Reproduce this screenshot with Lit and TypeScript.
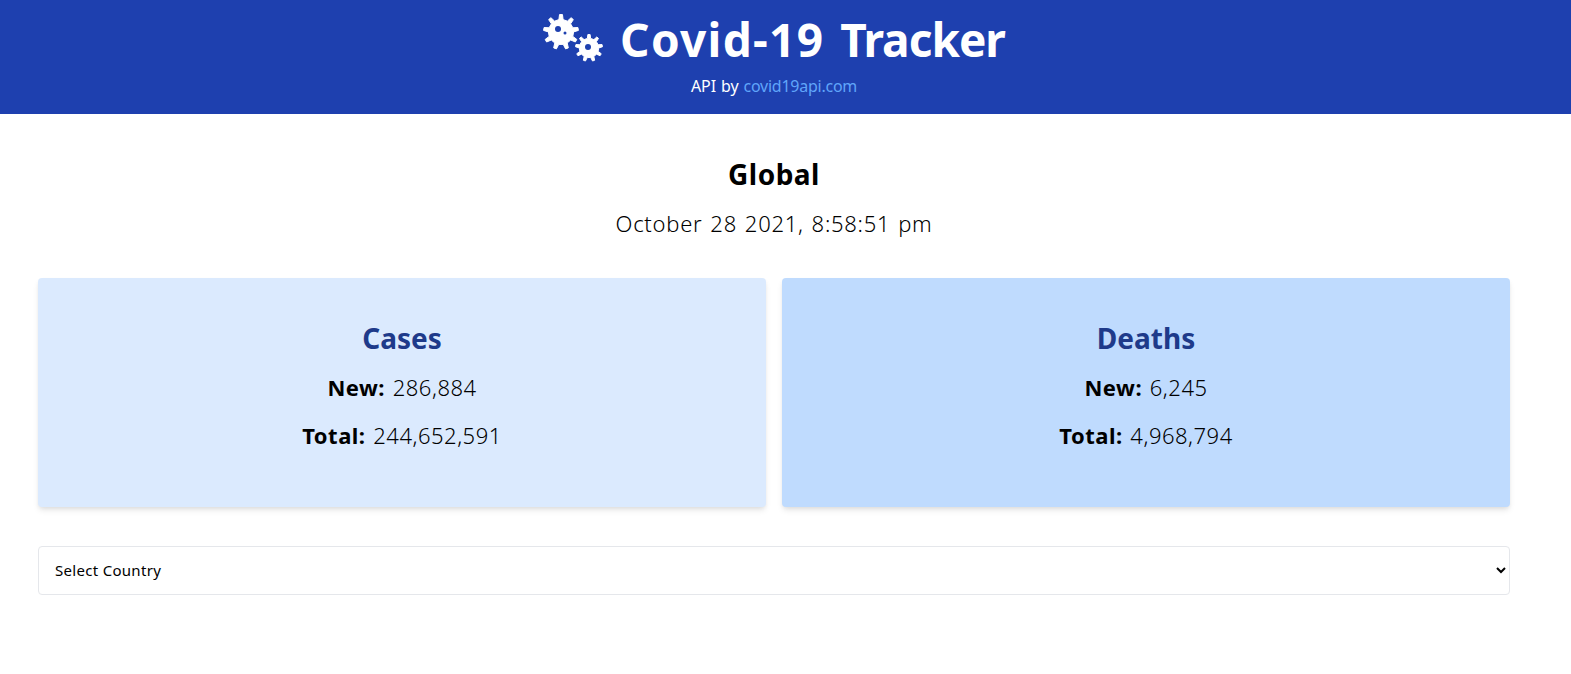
import { LitElement, html, css } from "lit";
import { customElement } from "lit/decorators.js";

function gear(cx: number, cy: number, r: number, teeth: number) {
  const pts: string[] = [];
  const rb = r * 0.72;
  const step = (Math.PI * 2) / teeth;
  const p = (rad: number, ang: number) =>
    `${(cx + rad * Math.cos(ang)).toFixed(2)} ${(cy + rad * Math.sin(ang)).toFixed(2)}`;
  for (let i = 0; i < teeth; i++) {
    const a = i * step - Math.PI / 2;
    const w = step * 0.12;
    const wb = step * 0.24;
    pts.push(`${i === 0 ? "M" : "L"}${p(rb, a - wb)}`, `L${p(r, a - w)}`, `L${p(r, a + w)}`, `L${p(rb, a + wb)}`);
  }
  return pts.join("") + "z";
}

@customElement("app-root")
export class AppRoot extends LitElement {
  static styles = css`
    :host {
      display: block;
      font-family: "Noto Sans", "Noto Sans CJK KR", "Open Sans", sans-serif;
      color: #000;
      background: #fff;
      min-height: 674px;
    }
    header {
      background: #1e40af;
      color: #fff;
      height: 114px;
      box-sizing: border-box;
      padding-right: 23px;
      text-align: center;
    }
    h1 {
      margin: 0;
      padding-top: 7px;
      height: 70px;
      box-sizing: border-box;
      font-size: 46px;
      line-height: 60px;
      font-weight: 700;
      word-spacing: 4px;
      display: flex;
      justify-content: center;
      align-items: center;
      gap: 17px;
      white-space: nowrap;
    }
    .first { letter-spacing: 1.3px; }
    .second { letter-spacing: -1px; }
    .logo {
      width: 60px;
      height: 48px;
      flex: none;
      margin-bottom: 1px;
    }
    .api {
      margin: 4px 0 0;
      font-size: 16px;
      line-height: 24px;
      letter-spacing: -0.1px;
      word-spacing: 1px;
    }
    .api a {
      color: #60a5fa;
      text-decoration: none;
      letter-spacing: -0.25px;
    }
    main {
      box-sizing: border-box;
      width: 1548px;
      padding: 0 38px;
    }
    .head {
      text-align: center;
    }
    h2 {
      margin: 0;
      padding-top: 42px;
      font-size: 28px;
      line-height: 36px;
      font-weight: 700;
      letter-spacing: 0.5px;
    }
    .date {
      margin: 15px 0 0;
      font-size: 22px;
      font-weight: 350;
      line-height: 32px;
      letter-spacing: 0.72px;
      word-spacing: 1.5px;
    }
    .cards {
      display: grid;
      grid-template-columns: 1fr 1fr;
      gap: 16px;
      margin-top: 39px;
    }
    .card {
      height: 229px;
      box-sizing: border-box;
      padding-top: 38px;
      border-radius: 4px;
      text-align: center;
      box-shadow: 0 4px 6px -1px rgba(0, 0, 0, 0.1), 0 2px 4px -1px rgba(0, 0, 0, 0.06);
    }
    .cases { background: #dbeafe; }
    .deaths { background: #bfdbfe; }
    h3 {
      margin: 0;
      color: #1e3a8a;
      font-size: 28px;
      line-height: 44px;
      font-weight: 700;
    }
    .stat {
      margin: 0;
      font-size: 22px;
      font-weight: 350;
      line-height: 32px;
      padding-top: 11px;
      padding-bottom: 4px;
      letter-spacing: 0.5px;
      word-spacing: 1.5px;
    }
    .stat + .stat { padding-top: 12px; }
    .stat b { font-weight: 700; }
    .select {
      display: block;
      width: 100%;
      height: 49px;
      margin-top: 39px;
      box-sizing: border-box;
      padding: 0 12px 1px;
      background: #fff;
      color: #000;
      border: 1px solid #e5e7eb;
      border-radius: 4px;
      font: inherit;
      font-size: 15px;
      font-weight: 400;
      letter-spacing: 0.3px;
      outline: none;
    }
    .cut { fill: #1e40af; }
    .cog { fill: #fff; stroke: #fff; stroke-width: 1; stroke-linejoin: round; }
  `;

  render() {
    return html`
      <header>
        <h1>
          <svg class="logo" viewBox="0 0 60 48" aria-hidden="true">
            <path class="cog" d=${gear(18, 18, 17.5, 9)} />
            <circle class="cut" cx="15" cy="15" r="3" />
            <circle class="cut" cx="22" cy="19" r="1.5" />
            <path class="cog" d=${gear(46, 34, 13.5, 9)} />
            <circle class="cut" cx="45" cy="33" r="3" />
          </svg>
          <span><span class="first">Covid-19</span> <span class="second">Tracker</span></span>
        </h1>
        <p class="api">API by <a href="#">covid19api.com</a></p>
      </header>
      <main>
        <div class="head">
          <h2>Global</h2>
          <p class="date">October 28 2021, 8:58:51 pm</p>
        </div>
        <section class="cards">
          <article class="card cases">
            <h3>Cases</h3>
            <p class="stat"><b>New:</b> 286,884</p>
            <p class="stat"><b>Total:</b> 244,652,591</p>
          </article>
          <article class="card deaths">
            <h3>Deaths</h3>
            <p class="stat"><b>New:</b> 6,245</p>
            <p class="stat"><b>Total:</b> 4,968,794</p>
          </article>
        </section>
        <select class="select">
          <option>Select Country</option>
        </select>
      </main>
    `;
  }
}
